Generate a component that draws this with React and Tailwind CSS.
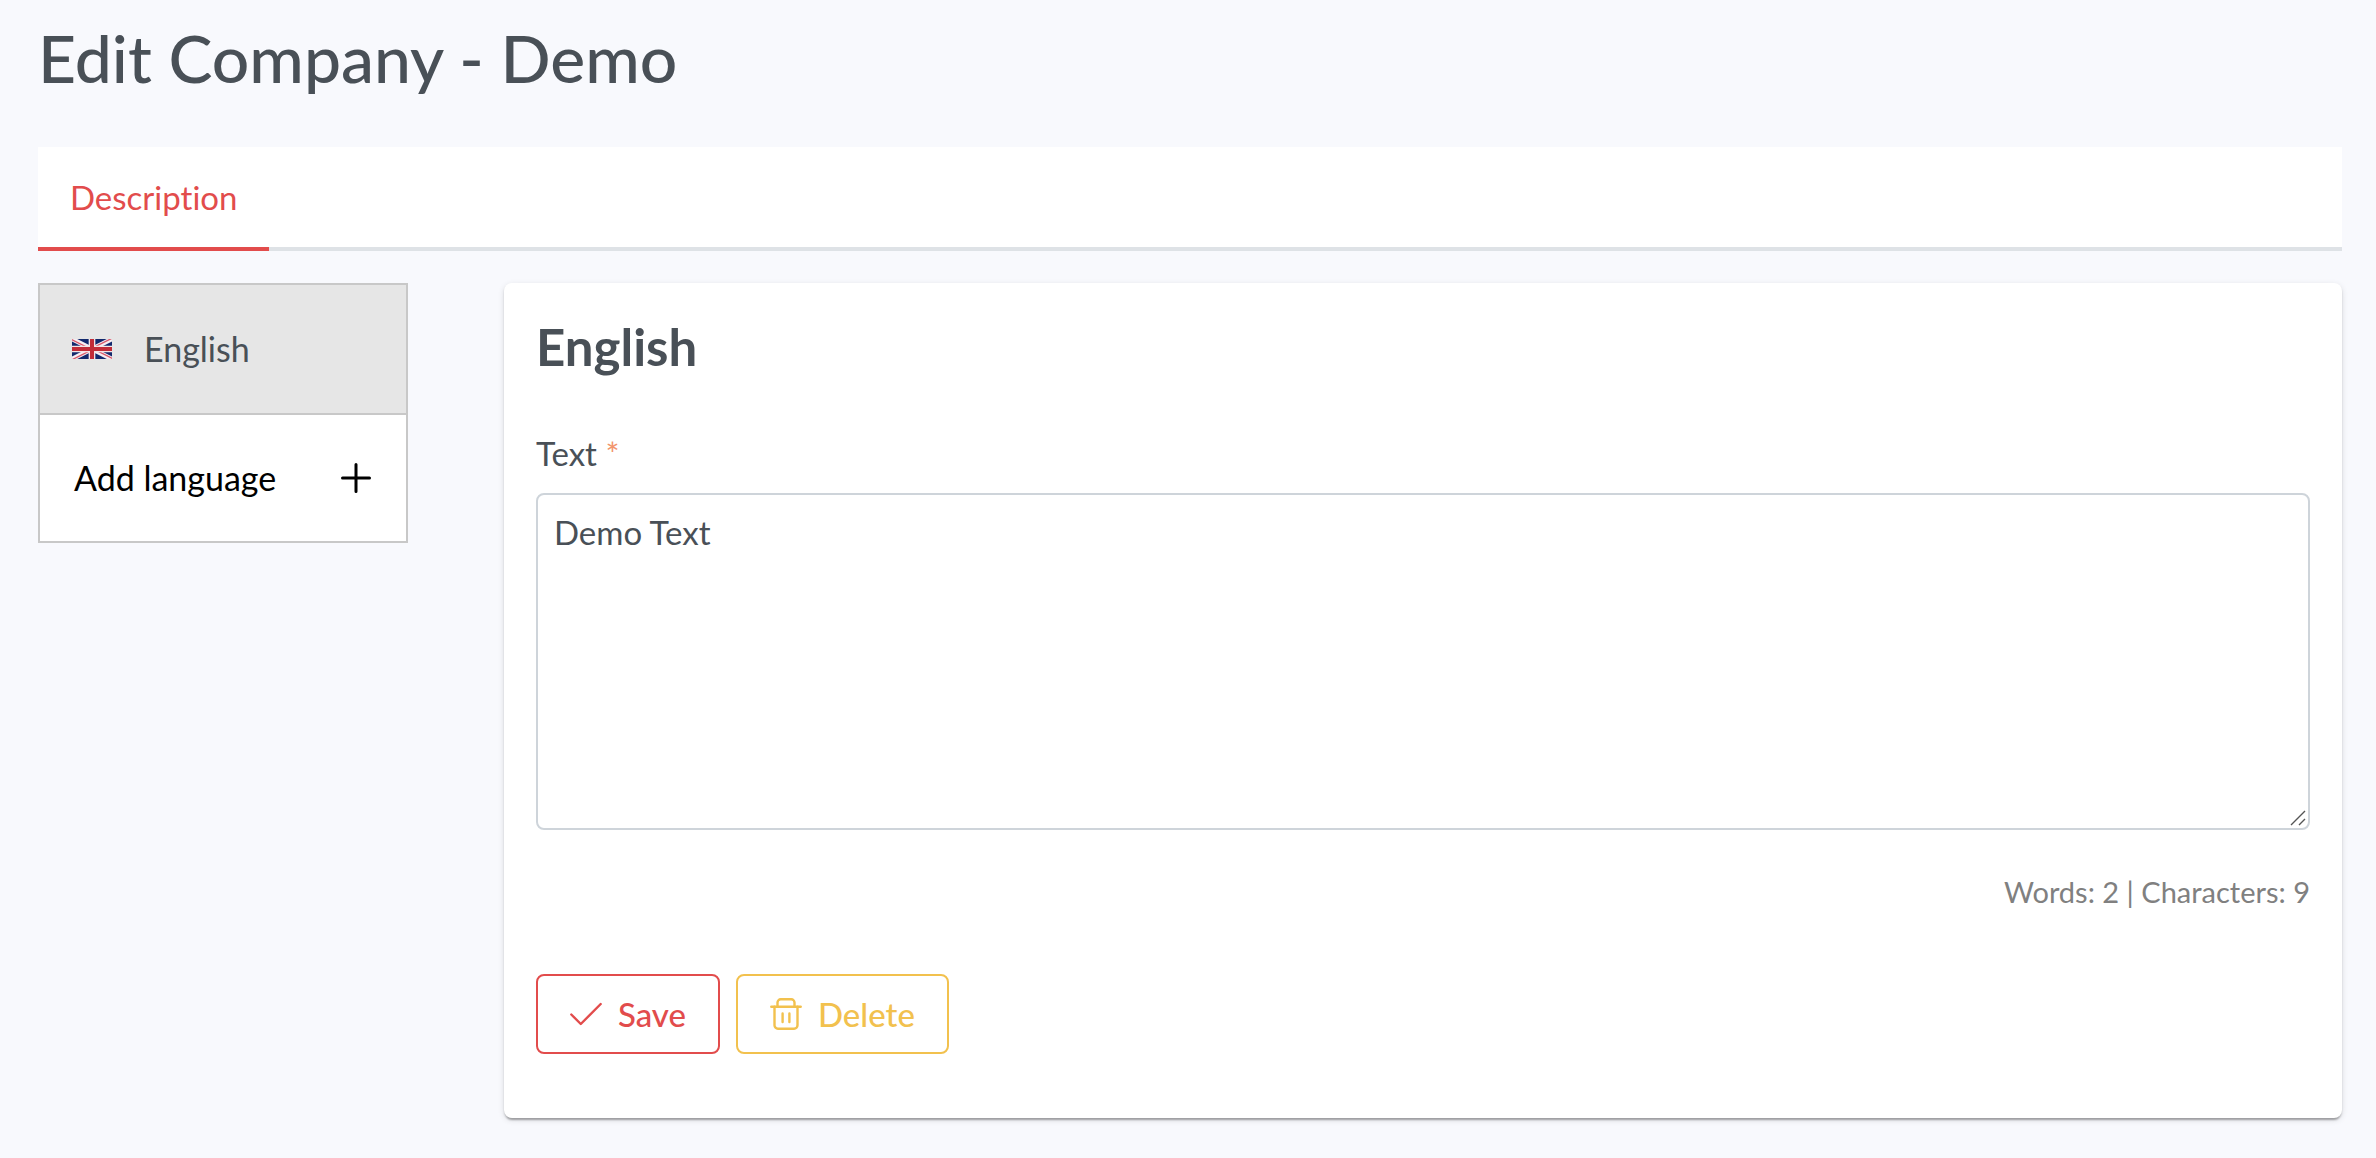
import { useState } from "react";

function UkFlag() {
    return (
        <svg className="w-10 h-5 shrink-0" viewBox="0 0 60 30" preserveAspectRatio="none" aria-hidden="true">
            <clipPath id="uk-corners">
                <path d="M30,15h30v15zv15h-30zh-30v-15zv-15h30z" />
            </clipPath>
            <rect width="60" height="30" fill="#12296d" />
            <path d="M0,0L60,30M60,0L0,30" stroke="#f6eef2" strokeWidth="7" />
            <path d="M0,0L60,30M60,0L0,30" clipPath="url(#uk-corners)" stroke="#d8586a" strokeWidth="4" />
            <path d="M30,0v30M0,15h60" stroke="#f3e4e6" strokeWidth="10" />
            <path d="M30,0v30M0,15h60" stroke="#c22c38" strokeWidth="6" />
        </svg>
    );
}

function PlusIcon() {
    return (
        <svg className="w-8 h-8 shrink-0" viewBox="0 0 32 32" stroke="currentColor" strokeWidth="3" strokeLinecap="round" aria-hidden="true">
            <path d="M16 2.5v27M2.5 16h27" />
        </svg>
    );
}

function CheckIcon() {
    return (
        <svg className="w-8 h-8" viewBox="0 0 32 32" fill="none" stroke="currentColor" strokeWidth="2.4" strokeLinecap="round" strokeLinejoin="round" aria-hidden="true">
            <path d="M1.3 16.5L10.8 26L30.7 6" />
        </svg>
    );
}

function TrashIcon() {
    return (
        <svg className="w-8 h-8" viewBox="0 0 32 32" fill="none" stroke="currentColor" strokeWidth="2.4" strokeLinecap="round" strokeLinejoin="round" aria-hidden="true">
            <path d="M1.3 8.7h29.4" />
            <path d="M4.5 8.7v18.6a3.4 3.4 0 0 0 3.4 3.4h16.2a3.4 3.4 0 0 0 3.4-3.4V8.7" />
            <path d="M7.5 8.2V4.5a3.2 3.2 0 0 1 3.2-3.2h10.6a3.2 3.2 0 0 1 3.2 3.2v3.7" />
            <path d="M12.6 15.4v8.6M19.4 15.4v8.6" />
        </svg>
    );
}

export default function App() {
    const [text, setText] = useState("Demo Text");
    const words = text.split(/\s+/).filter(Boolean).length;
    const characters = text.length;

    return (
        <div className="min-h-screen bg-[#f8f9fd] pl-[38px] pr-[34px] pt-5 pb-9 font-['Lato',sans-serif] text-[33px] leading-12 text-[#495057] [font-variant-ligatures:none]">
            <h1 className="text-[66px] leading-[76px] font-medium">Edit Company - Demo</h1>

            {/* Tabs */}
            <div role="tablist" className="mt-[51px] flex bg-white">
                <button role="tab" aria-selected="true" className="h-26 px-8 border-b-4 border-[#e24c4c] text-[#e24c4c]">
                    Description
                </button>
                <div className="flex-1 border-b-4 border-[#dee2e6]" />
            </div>

            <div className="mt-8 flex items-start gap-24">
                {/* Languages */}
                <div className="w-[370px] shrink-0 border-2 border-[#c8c8c8] bg-white text-[34px]">
                    <button className="flex w-full h-[130px] items-center gap-8 border-b-2 border-[#c8c8c8] bg-[#e6e6e6] px-8">
                        <UkFlag />
                        English
                    </button>
                    <button className="flex w-full h-[126px] items-center justify-between px-[34px] text-black">
                        Add language
                        <PlusIcon />
                    </button>
                </div>

                {/* Editor */}
                <form className="flex-1 rounded-lg bg-white px-8 pt-[34px] pb-16 shadow-[0_4px_2px_-2px_rgba(0,0,0,0.2),0_2px_2px_0_rgba(0,0,0,0.14),0_2px_6px_0_rgba(0,0,0,0.12)]" onSubmit={(e) => e.preventDefault()}>
                    <h2 className="text-[51px] leading-15 font-bold">English</h2>
                    <label htmlFor="text" className="mt-13 block">
                        Text <span className="text-[#f2946c]">*</span>
                    </label>
                    <div className="relative mt-4">
                        <textarea
                            id="text"
                            className="block w-full h-[337px] resize-none rounded-lg border-2 border-[#ced4da] bg-white px-4 py-[13px]"
                            value={text}
                            onChange={(e) => setText(e.target.value)}
                        />
                        <svg className="absolute right-1 bottom-1 w-4 h-4 pointer-events-none" viewBox="0 0 16 16" stroke="#555" strokeWidth="1.4" aria-hidden="true">
                            <path d="M1 15L15 1M9 15L15 9" />
                        </svg>
                    </div>
                    <p className="mt-10 text-right text-[29px] leading-11 text-[#808080]">
                        Words: {words} | Characters: {characters}
                    </p>

                    {/* Actions */}
                    <div className="mt-15 flex gap-4">
                        <button type="submit" className="flex h-20 items-center gap-4 rounded-lg border-2 border-[#e24c4c] px-8 font-medium text-[#e24c4c]">
                            <CheckIcon />
                            Save
                        </button>
                        <button type="button" className="flex h-20 items-center gap-4 rounded-lg border-2 border-[#f2c14e] px-8 font-medium text-[#f2c14e]">
                            <TrashIcon />
                            Delete
                        </button>
                    </div>
                </form>
            </div>
        </div>
    );
}
